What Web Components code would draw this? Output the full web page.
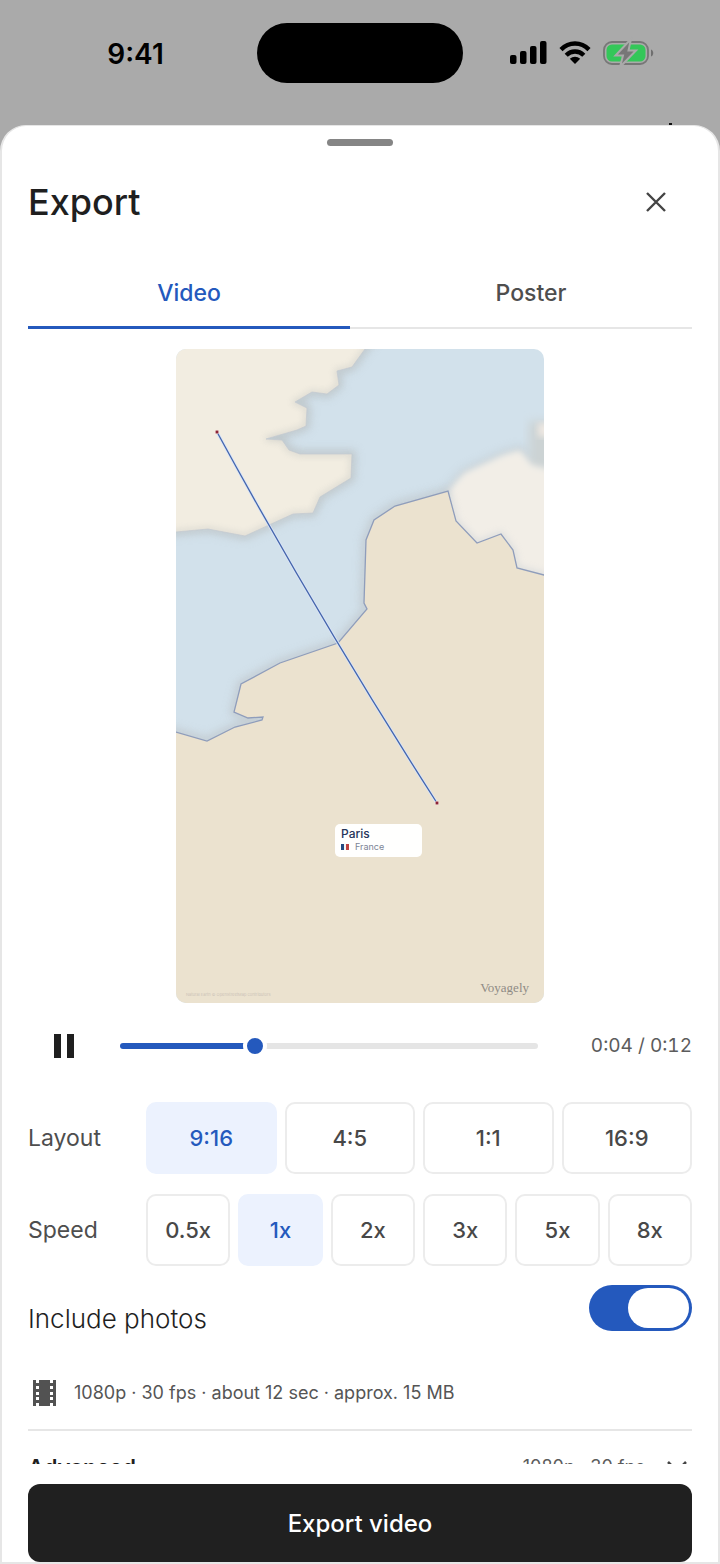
<!DOCTYPE html>
<html lang="en">
<head>
<meta charset="utf-8">
<meta name="viewport" content="width=device-width, initial-scale=1">
<title>Export</title>
<style>
  html, body { margin: 0; height: 100%; }
  body {
    background: #aaaaaa;
    font-family: Inter, "Open Sans", sans-serif;
    color: #1f1f1f;
    --accent: #2459bd;
    --accent-soft: #ecf2fe;
    --line: #e6e6e6;
    --muted: #4e4e4e;
    --gutter: 26px;
  }
</style>
</head>
<body>
<export-screen></export-screen>

<script>
function define(name, html, setup) {
  const template = document.createElement('template');
  template.innerHTML = html;
  customElements.define(name, class extends HTMLElement {
    constructor() {
      super();
      this.attachShadow({ mode: 'open' }).append(template.content.cloneNode(true));
    }
    connectedCallback() { if (setup) setup(this, this.shadowRoot); }
  });
}

define('status-bar', `
  <style>
    :host { display: grid; grid-template-columns: 1fr 206px 1fr; height: 60px; padding: 23px 0 42px; position: relative; color: #000; }
    time { display: flex; align-items: center; justify-content: center; padding: 2px 0 0 14px; font-size: 28px; font-weight: 600; }
    .island { background: #000; border-radius: 30px; }
    .icons { display: flex; align-items: center; justify-content: center; gap: 12px; padding-right: 19px; }
    svg { display: block; }
    .peek { position: absolute; right: 48px; bottom: 0; width: 3px; height: 2px; background: #111; }
  </style>
  <time>9:41</time>
  <div class="island"></div>
  <div class="icons">
    <svg width="37" height="24" viewBox="0 0 37 24" aria-label="Signal"><rect y="14" width="6.500" height="9" rx="2"/><rect x="10" y="10" width="6.500" height="13" rx="2"/><rect x="20" y="5" width="6.500" height="18" rx="2"/><rect x="30" width="6.500" height="23" rx="2"/></svg>
    <svg width="32" height="24" viewBox="0 0 32 24" aria-label="Wi-Fi"><g fill="none" stroke="#000" stroke-width="4.400"><path d="M2 8.600C10 .5 22 .5 30 8.600"/><path d="M7.200 14.300c5-5 12.600-5 17.600 0"/></g><path d="M10.800 17.800c3-2.800 7.400-2.800 10.400 0L16 23z"/></svg>
    <svg width="51" height="24" viewBox="0 0 51 24" aria-label="Battery charging" overflow="visible"><rect x="1" y="1" width="44" height="22" rx="8" fill="none" stroke="#777" stroke-width="1.800"/><rect x="3.500" y="3.500" width="39" height="17" rx="5.500" fill="#34c759"/><path d="M48 8.500c3 1 3 6 0 7z" fill="#6f6f6f"/><path d="M28-2 12.500 14.500H20L17 26 33 9.500H25.500z" fill="#777" stroke="#aaa" stroke-width="2"/></svg>
  </div>
  <span class="peek"></span>`);

define('sheet-header', `
  <style>
    :host { display: flex; align-items: center; justify-content: space-between; height: 72px; }
    h1 { margin: 0; font-size: 36px; line-height: 44px; font-weight: 500; }
    button { width: 72px; height: 72px; padding: 0; border: 0; background: none; display: grid; place-items: center; color: #444; }
  </style>
  <h1><slot></slot></h1>
  <button aria-label="Close"><svg width="20" height="20" viewBox="0 0 20 20" fill="none" stroke="currentColor" stroke-width="2.400"><path d="m1 1 18 18M19 1 1 19"/></svg></button>`);

define('tab-bar', `
  <style>
    :host { display: block; }
    div { display: grid; grid-template-columns: 1fr 1fr; column-gap: 20px; height: 72px; box-shadow: inset 0 -2px var(--line); }
    button { font: 500 23px/28px Inter, sans-serif; border: 0; border-bottom: 3px solid transparent; padding: 2px 0 0; background: none; color: var(--muted); }
    button[aria-selected="true"] { color: var(--accent); border-color: var(--accent); }
  </style>
  <div role="tablist"><button role="tab" aria-selected="true">Video</button><button role="tab" aria-selected="false">Poster</button></div>`,
  (host, root) => {
    const tabs = root.querySelectorAll('button');
    tabs.forEach(t => t.onclick = () => tabs.forEach(o => o.setAttribute('aria-selected', o === t)));
  });

define('place-label', `
  <style>
    :host { display: block; box-sizing: border-box; width: 87px; height: 33px; padding: 2px 6px; border-radius: 5px; background: #fffffe; color: #26355a; }
    strong { display: block; font-size: 12px; line-height: 15px; font-weight: 500; }
    span { display: flex; align-items: center; gap: 6px; font-size: 9px; line-height: 12px; color: #7c8496; }
  </style>
  <strong><slot></slot></strong>
  <span><svg width="8" height="6" viewBox="0 0 8 6" aria-hidden="true"><path fill="#234a80" d="M0 0h3v6H0z"/><path fill="#f4f4f4" d="M3 0h2v6H3z"/><path fill="#c0433f" d="M5 0h3v6H5z"/></svg><slot name="country"></slot></span>`);

define('route-map', `
  <style>
    :host { display: block; position: relative; width: 368px; max-width: 100%; margin: 20px auto 0; border-radius: 10px; overflow: hidden; }
    svg { display: block; width: 100%; height: auto; }
    place-label { position: absolute; left: 159px; top: 475px; }
    .brand, .credit { position: absolute; }
    .brand { right: 15px; bottom: 7px; font: 13px/16px "Liberation Serif", serif; color: #8f8b85; }
    .credit { left: 10px; bottom: 6px; font-size: 4px; line-height: 5px; color: #cbc3b8; }
  </style>
  <svg viewBox="0 0 368 654" role="img" aria-label="Route from England to Paris">
    <defs>
      <filter id="soft" x="-20%" y="-20%" width="140%" height="140%"><feGaussianBlur stdDeviation="5"/></filter>
      <filter id="edge" x="-20%" y="-20%" width="140%" height="140%"><feGaussianBlur stdDeviation="3"/></filter>
      <path id="uk" d="M-20-20H205L189 0 176 18 161 22 163 36 151 45 136 43 119 53 131 59 130 77 121 81 90 90 106 91 113 101 124 105H176L175 129 144 148 137 164 117 165 69 187 32 180 0 183-20 185Z"/>
      <path id="fr" d="M-20 377 0 383 31 392 59 378 86 371 87 368 72 369 58 363 65 335 104 314 162 294 191 260 188 254 190 191 198 171 219 157 272 142 280 172 301 194 325 185 337 201 341 219 368 226 388 230V674H-20Z"/>
      <path id="be" d="M272 142 288 124 327 106 344 101 356 116 390 124V240L330 230 270 190Z"/>
    </defs>
    <rect width="368" height="654" fill="#d2e1eb"/>
    <g filter="url(#soft)" fill="none" stroke="#b5babb" stroke-width="7" opacity=".5"><use href="#uk"/><use href="#fr"/><use href="#be"/></g>
    <use href="#uk" fill="#f2ede1"/>
    <use href="#uk" fill="none" stroke="#b8bcba" stroke-width="4" opacity=".45" filter="url(#edge)"/>
    <use href="#uk" fill="none" stroke="#c3c9d0" stroke-width="1" opacity=".7"/>
    <path d="M353 72H380V122H353z" fill="#ccd3d4" filter="url(#soft)"/>
    <path d="M362 74H380V88H362z" fill="#eee8e2" filter="url(#edge)"/>
    <use href="#be" fill="#f2eee7" filter="url(#edge)"/>
    <use href="#fr" fill="none" stroke="#c4ccd2" stroke-width="5" opacity=".5" filter="url(#edge)"/>
    <use href="#fr" fill="#ebe2cf" stroke="#8f9dbb" stroke-width="1.300"/>
    <path d="M41 83Q143 270 261 454" fill="none" stroke="#d9e4f6" stroke-width="3"/>
    <path d="M41 83Q143 270 261 454" fill="none" stroke="#4465ab" stroke-width="1.300"/>
    <g fill="#8b2336" stroke="#f8e5df" stroke-width=".600"><circle cx="41" cy="83" r="1.900"/><circle cx="261" cy="454" r="1.900"/></g>
  </svg>
  <place-label>Paris<span slot="country">France</span></place-label>
  <span class="credit">Natural Earth © OpenStreetMap contributors</span>
  <span class="brand">Voyagely</span>`);

define('playback-bar', `
  <style>
    :host { display: grid; grid-template-columns: 72px 1fr 134px; column-gap: 20px; align-items: center; height: 72px; margin-top: 7px; }
    button { height: 72px; padding: 0; border: 0; background: none; display: grid; place-items: center; }
    .track { display: flex; }
    input { appearance: none; width: 100%; height: 24px; margin: 0; background: none; }
    input::-webkit-slider-runnable-track { height: 6px; border-radius: 3px; background: linear-gradient(90deg, var(--accent) 32%, #e5e5e5 32%); }
    input::-webkit-slider-thumb { appearance: none; box-sizing: border-box; width: 24px; height: 24px; margin-top: -9px; border: 4px solid #fff; border-radius: 50%; background: var(--accent); }
    output { text-align: right; font-size: 19px; line-height: 24px; font-variant-numeric: tabular-nums; color: #5c5c5c; white-space: nowrap; }
  </style>
  <button aria-label="Pause"><svg width="20" height="24" viewBox="0 0 20 24" fill="#1f1f1f"><path d="M0 0h7v24H0zM13 0h7v24h-7z"/></svg></button>
  <div class="track"><input type="range" aria-label="Position" min="0" max="12" step="any" value="3.75"></div>
  <output>0:04 / 0:12</output>`);

define('option-row', `
  <style>
    :host { display: grid; grid-template-columns: 110px 1fr; column-gap: 8px; align-items: center; margin-top: 20px; }
    #label { font-size: 23px; line-height: 28px; color: var(--muted); }
    .options { display: grid; grid-auto-flow: column; grid-auto-columns: 1fr; gap: 8px; }
    button { height: 72px; padding: 0; border: 2px solid #ececec; border-radius: 10px; background: #fff; color: #484848; font: 500 22px/28px Inter, sans-serif; }
    button[aria-pressed="true"] { color: var(--accent); background: var(--accent-soft); border-color: var(--accent-soft); }
  </style>
  <span id="label"><slot></slot></span>
  <div class="options" role="group" aria-labelledby="label"></div>`,
  (host, root) => {
    const group = root.querySelector('.options');
    if (group.children.length) return;
    for (const text of host.getAttribute('options').split(' ')) {
      const button = document.createElement('button');
      button.textContent = text;
      button.setAttribute('aria-pressed', text === host.getAttribute('value'));
      button.onclick = () => [...group.children].forEach(b => b.setAttribute('aria-pressed', b === button));
      group.append(button);
    }
  });

define('switch-row', `
  <style>
    :host { display: block; margin-top: 19px; }
    label { display: flex; justify-content: space-between; height: 50px; font-size: 26px; line-height: 32px; font-weight: 300; }
    span { align-self: end; }
    input { appearance: none; box-sizing: border-box; width: 103px; height: 46px; margin: 0; padding: 3px; border-radius: 23px; background: #c9c9c9; display: flex; }
    input::before { content: ""; width: 61px; border-radius: 20px; background: #fff; }
    input:checked { background: var(--accent); justify-content: end; }
  </style>
  <label><span><slot></slot></span><input type="checkbox" role="switch" checked></label>`);

define('output-summary', `
  <style>
    :host { display: flex; align-items: center; gap: 18px; margin-top: 22px; padding: 22px 0 22px 5px; border-bottom: 2px solid var(--line); font-size: 18px; line-height: 28px; color: #555; }
    svg { display: block; }
  </style>
  <svg width="23" height="26" viewBox="0 0 23 26" aria-hidden="true"><path fill="#525252" fill-rule="evenodd" d="M0 0h3v3h3V0h11v3h3V0h3v26h-3v-3h-3v3H6v-3H3v3H0zM3 6v3h3V6zm0 6v3h3v-3zm0 5v3h3v-3zM17 6v3h3V6zm0 6v3h3v-3zm0 5v3h3v-3z"/></svg>
  <span><slot></slot></span>`);

define('advanced-row', `
  <style>
    :host { display: block; }
    button { display: flex; align-items: center; width: 100%; height: 72px; padding: 0 5px 0 0; border: 0; background: none; text-align: left; color: #1f1f1f; font: 600 22px/28px Inter, sans-serif; }
    .value { margin-left: auto; margin-right: 22px; font-size: 18px; font-weight: 400; color: #5c5c5c; }
  </style>
  <button aria-expanded="false"><slot></slot><span class="value"><slot name="value"></slot></span>
    <svg width="20" height="12" viewBox="0 0 20 12" fill="none" stroke="#444" stroke-width="2.600" aria-hidden="true"><path d="m1 1 9 9 9-9"/></svg></button>`);

define('primary-button', `
  <style>
    :host { display: block; }
    button { display: block; width: 100%; height: 78px; padding: 2px 0 0; border: 0; border-radius: 12px; background: #202020; color: #fff; font: 500 24px/32px Inter, sans-serif; }
  </style>
  <button><slot></slot></button>`);

define('bottom-sheet', `
  <style>
    :host { display: flex; flex-direction: column; min-height: 0; box-sizing: border-box; border: 2px solid var(--line); border-top-width: 1px; border-radius: 26px 26px 0 0; background: #fff; }
    .handle { flex: none; width: 66px; height: 7px; margin: 13px auto 0; border-radius: 4px; background: #858585; }
    .top { flex: none; padding: 20px var(--gutter) 0; }
    .body { flex: 1; min-height: 0; overflow-y: auto; scrollbar-width: none; padding: 0 var(--gutter); }
    .foot { flex: none; padding: 20px var(--gutter) 0; }
  </style>
  <div class="handle"></div>
  <div class="top"><slot name="top"></slot></div>
  <div class="body"><slot></slot></div>
  <div class="foot"><slot name="foot"></slot></div>`);

define('export-screen', `
  <style>
    :host { display: flex; flex-direction: column; height: 100vh; }
    status-bar { flex: none; }
    bottom-sheet { flex: 1; }
    tab-bar { margin-top: 19px; }
  </style>
  <status-bar></status-bar>
  <bottom-sheet>
    <sheet-header slot="top">Export</sheet-header>
    <tab-bar></tab-bar>
    <route-map></route-map>
    <playback-bar></playback-bar>
    <option-row options="9:16 4:5 1:1 16:9" value="9:16">Layout</option-row>
    <option-row options="0.5x 1x 2x 3x 5x 8x" value="1x">Speed</option-row>
    <switch-row>Include photos</switch-row>
    <output-summary>1080p · 30 fps · about 12 sec · approx. 15 MB</output-summary>
    <advanced-row>Advanced<span slot="value">1080p · 30 fps</span></advanced-row>
    <primary-button slot="foot">Export video</primary-button>
  </bottom-sheet>`);
</script>
</body>
</html>
